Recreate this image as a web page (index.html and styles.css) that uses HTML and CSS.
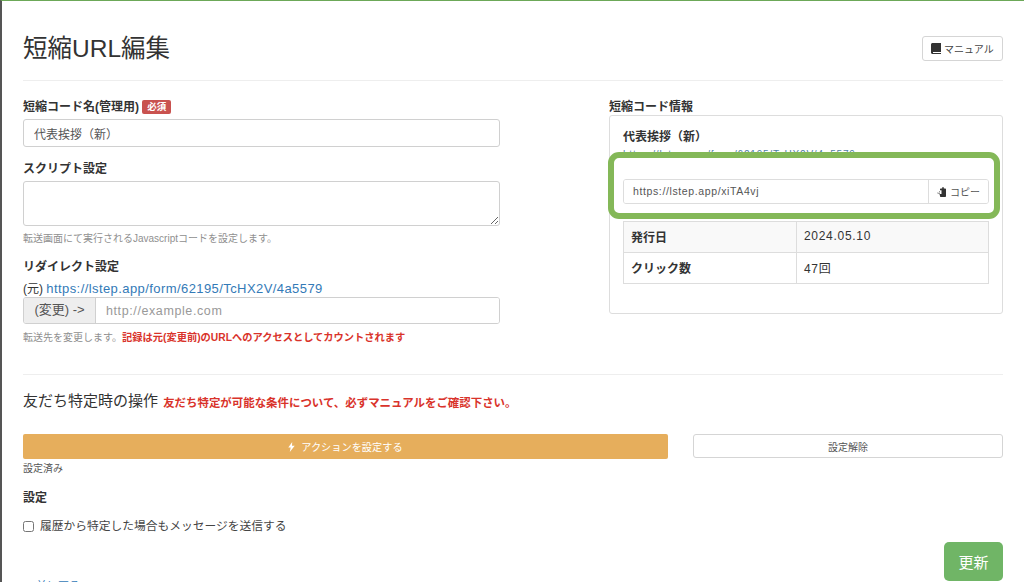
FILE: index.html

```html
<!DOCTYPE html>
<html lang="ja">
<head>
    <meta charset="UTF-8">
    <title>短縮URL編集</title>
    <link rel="stylesheet" href="styles.css">
</head>
<body>
<div class="page">
    <div class="page-header">
        <h1>短縮URL編集</h1>
        <button class="btn btn-manual">
            <svg class="icon" width="10" height="11" viewBox="0 0 10 11"><path fill="#333" d="M1.500 0H10v9H2v1h8v1H1.500C.7 11 0 10.300 0 9.500v-8C0 .7.700 0 1.500 0z"/></svg>
            マニュアル
        </button>
    </div>

    <div class="columns">
        <div class="col-form">
            <label class="label label-first">短縮コード名(管理用) <span class="badge">必須</span></label>
            <input class="control" type="text" value="代表挨拶（新）">

            <label class="label">スクリプト設定</label>
            <textarea class="control control-area"></textarea>
            <p class="help">転送画面にて実行されるJavascriptコードを設定します。</p>

            <label class="label label-redirect">リダイレクト設定</label>
            <div class="origin">(元) <a href="#">https://lstep.app/form/62195/TcHX2V/4a5579</a></div>
            <div class="input-group">
                <span class="addon">(変更) -&gt;</span>
                <input type="text" placeholder="http://example.com">
            </div>
            <p class="help help-last">転送先を変更します。<b class="warn">記録は元(変更前)のURLへのアクセスとしてカウントされます</b></p>
        </div>

        <div class="col-info">
            <label class="label label-first">短縮コード情報</label>
            <div class="panel">
                <div class="panel-title">代表挨拶（新）</div>
                <div class="panel-url">https://lstep.app/form/62195/TcHX2V/4a5579</div>
                <table class="info">
                    <tr class="striped"><th>発行日</th><td>2024.05.10</td></tr>
                    <tr><th>クリック数</th><td>47回</td></tr>
                </table>

                <div class="highlight">
                    <div class="copy-group">
                        <input type="text" value="https://lstep.app/xiTA4vj">
                        <button class="copy-btn">
                            <svg class="icon" width="10" height="10" viewBox="0 0 10 10"><path fill="#333" d="M4 1.500h1.200V.8C5.200.3 5.600 0 6 0s.8.300.8.8v.7H8c.6 0 1 .4 1 1V9c0 .6-.4 1-1 1H3.800c-.5 0-.9-.4-.9-.9V7h1.600V3.200H3V2.500c0-.6.400-1 1-1z"/><path fill="#333" d="M3 4.200v1H.6v1.300H3v1L.9 6.800 0 5.900z"/></svg>
                            コピー
                        </button>
                    </div>
                </div>
            </div>
        </div>
    </div>

    <div class="friend-section">
        <h2>友だち特定時の操作 <b class="warn warn-lg">友だち特定が可能な条件について、必ずマニュアルをご確認下さい。</b></h2>
        <div class="action-row">
            <div class="action-main">
                <button class="btn-action">
                    <svg class="icon icon-bolt" width="7" height="10" viewBox="0 0 7 10"><path fill="#fff" d="M4.200 0 .3 5.600h2.400L1.800 10 6.700 3.700H4z"/></svg>
                    アクションを設定する
                </button>
                <div class="status">設定済み</div>
            </div>
            <button class="btn btn-clear">設定解除</button>
        </div>

        <label class="label label-setting">設定</label>
        <label class="check-row"><input type="checkbox"> 履歴から特定した場合もメッセージを送信する</label>
    </div>

    <div class="page-footer">
        <a class="back" href="#">前に戻る</a>
        <button class="btn-update">更新</button>
    </div>
</div>
</body>
</html>
```

FILE: styles.css

```css
* {
    box-sizing: border-box;
}
html, body {
    margin: 0;
    height: 582px;
    overflow: hidden;
    background: #fff;
}
body {
    font-family: "Liberation Sans", "Noto Sans CJK JP", sans-serif;
    color: #333;
    font-size: 12px;
}
button, input, textarea {
    font-family: inherit;
    margin: 0;
}
.page {
    height: 582px;
    overflow: hidden;
    border-top: 1px solid #6ca858;
    border-left: 2px solid #555;
    padding: 0 21px;
}
.page-header {
    height: 80px;
    border-bottom: 1px solid #eee;
    display: flex;
    justify-content: space-between;
    align-items: flex-start;
}
h1 {
    margin: 30px 0 0;
    font-size: 24.500px;
    line-height: 36px;
    font-weight: 400;
}
.btn {
    background: #fff;
    border: 1px solid #d5d5d5;
    border-radius: 3px;
    color: #444;
    font-size: 10px;
}
.btn-manual {
    width: 81px;
    height: 25px;
    margin-top: 35px;
    padding: 0 0 1px;
}
.icon {
    vertical-align: -1px;
}
.icon-bolt {
    margin-right: 3px;
}
.columns {
    display: flex;
    justify-content: space-between;
}
.col-form {
    width: 477px;
}
.col-info {
    width: 394px;
}
.label {
    display: block;
    height: 16px;
    font-size: 12px;
    line-height: 16px;
    font-weight: 700;
    margin-top: 14px;
}
.label-first {
    margin-top: 18px;
}
.label-redirect {
    margin-top: 13px;
}
.badge {
    display: inline-block;
    background: #c9524f;
    color: #fff;
    font-size: 9.500px;
    line-height: 14px;
    padding: 0 5px;
    border-radius: 2px;
    vertical-align: 1px;
}
.control {
    display: block;
    width: 100%;
    height: 28px;
    margin-top: 4px;
    border: 1px solid #d0d0d0;
    border-radius: 3px;
    padding: 0 10px;
    color: #555;
    font-size: 12px;
}
.control-area {
    height: 45px;
}
.help {
    margin: 6px 0 0;
    font-size: 10px;
    line-height: 14px;
    color: #8f8f8f;
}
.help-last {
    margin-top: 7px;
}
.warn {
    color: #d9332b;
    font-weight: 700;
    font-size: 10.250px;
}
.origin {
    margin-top: 6px;
    font-size: 12px;
    line-height: 16px;
}
.origin a {
    color: #337ab7;
    text-decoration: none;
    font-size: 13px;
    letter-spacing: .42px;
}
.input-group {
    display: flex;
    height: 27px;
    border: 1px solid #d0d0d0;
    border-radius: 3px;
    overflow: hidden;
}
.addon {
    width: 72px;
    flex: none;
    background: #eee;
    border-right: 1px solid #d0d0d0;
    color: #555;
    font-size: 13px;
    line-height: 24px;
    text-align: center;
}
.input-group input {
    flex: 1;
    border: 0;
    padding: 0 10px;
    font-size: 12.500px;
    letter-spacing: .6px;
}
.input-group input::placeholder {
    color: #999;
}
.panel {
    position: relative;
    height: 199px;
    border: 1px solid #ddd;
    border-radius: 3px;
    padding: 13px 13px 0;
}
.panel-title {
    height: 16px;
    font-size: 12px;
    line-height: 16px;
    font-weight: 700;
}
.panel-url {
    height: 14px;
    margin-top: 3px;
    font-size: 10px;
    line-height: 14px;
    color: #4f7ea3;
    letter-spacing: .8px;
}
table.info {
    width: 366px;
    height: 63px;
    margin-top: 59px;
    border-collapse: collapse;
    table-layout: fixed;
    font-size: 12px;
}
.info th, .info td {
    border: 1px solid #ddd;
    padding: 0 7px 2px;
    text-align: left;
}
.info th {
    width: 173px;
}
.info td {
    letter-spacing: .7px;
}
.striped {
    background: #f9f9f9;
}
/* annotation box drawn over the panel */
.highlight {
    position: absolute;
    top: 36px;
    left: -2px;
    width: 392px;
    height: 67px;
    background: #fff;
    border: 6px solid #84b858;
    border-radius: 11px;
    padding: 21px 0 0 9px;
}
.copy-group {
    display: flex;
    width: 366px;
    height: 25px;
    border: 1px solid #ddd;
    border-radius: 3px;
    overflow: hidden;
}
.copy-group input {
    flex: 1;
    min-width: 0;
    border: 0;
    padding: 0 9px 1px;
    color: #555;
    font-size: 10.500px;
    letter-spacing: .62px;
}
.copy-btn {
    width: 60px;
    flex: none;
    border: 0;
    border-left: 1px solid #ddd;
    background: #fff;
    color: #555;
    font-size: 10px;
    padding: 0;
}
.friend-section {
    margin-top: 29px;
    border-top: 1px solid #eee;
}
h2 {
    height: 22px;
    margin: 15px 0 0;
    font-size: 15px;
    line-height: 22px;
    font-weight: 400;
}
.warn-lg {
    font-size: 11.450px;
    margin-left: 1px;
    vertical-align: -1px;
}
.action-row {
    display: flex;
    gap: 25px;
    margin-top: 22px;
    align-items: flex-start;
}
.action-main {
    width: 645px;
}
.btn-action {
    display: block;
    width: 100%;
    height: 25px;
    background: #e6ae5c;
    border: 0;
    border-radius: 2px;
    color: #fff;
    font-size: 10.200px;
    padding: 0 0 1px;
}
.status {
    margin-top: 3px;
    font-size: 10px;
    line-height: 14px;
    color: #555;
}
.btn-clear {
    width: 310px;
    height: 24px;
    padding: 0;
    color: #555;
}
.label-setting {
    margin-top: 14px;
}
.check-row {
    display: flex;
    align-items: center;
    gap: 6px;
    margin-top: 12px;
    font-size: 11.750px;
    line-height: 16px;
    color: #444;
}
.check-row input {
    width: 11px;
    height: 11px;
    margin: 0;
}
.page-footer {
    display: flex;
    justify-content: space-between;
    align-items: flex-start;
    margin-top: 8px;
}
.back {
    margin: 36px 0 0 13px;
    color: #337ab7;
    font-size: 11px;
    line-height: 16px;
    text-decoration: none;
}
.btn-update {
    width: 59px;
    height: 39px;
    background: #70b566;
    border: 0;
    border-radius: 5px;
    color: #fff;
    font-size: 15px;
    padding: 0;
}
```
